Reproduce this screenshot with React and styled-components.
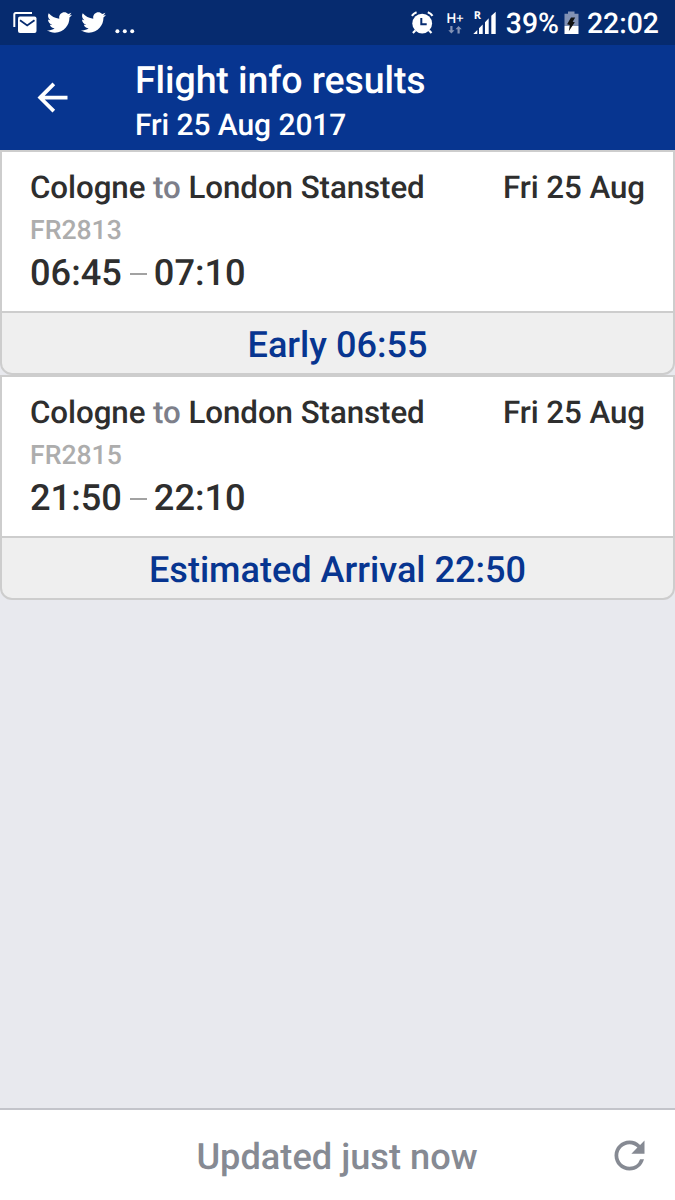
import React from "react";
import styled, { createGlobalStyle } from "styled-components";
import { FaTwitter } from "react-icons/fa";
import { MdArrowBack, MdRefresh } from "react-icons/md";

const GlobalStyle = createGlobalStyle`
  * { box-sizing: border-box; }
  body { margin: 0; font-family: Roboto, "Liberation Sans", sans-serif; font-weight: 500; text-rendering: geometricPrecision; }
  svg { display: block; flex: none; }
`;

const Screen = styled.div`
  display: flex;
  flex-direction: column;
  width: 675px;
  height: 1200px;
  overflow: hidden;
  background: #e8e9ee;
`;

const StatusBar = styled.div`
  display: flex;
  justify-content: space-between;
  height: 45px;
  padding: 0 16px 0 13px;
  background: #062b6f;
  color: #fff;
`;

const StatusGroup = styled.div`
  display: flex;
  align-items: center;
  height: 45px;
`;

const Gap = styled.span`
  flex: none;
  width: ${(p) => p.$w}px;
`;

const StatusText = styled.span`
  font-size: 28.4px;
  line-height: 45px;
  font-weight: 500;
  padding-top: 1px;
  white-space: nowrap;
`;

const Header = styled.header`
  display: flex;
  height: 105px;
  background: #073590;
  color: #fff;
`;

const BackButton = styled.button`
  display: flex;
  align-items: center;
  width: 135px;
  height: 105px;
  padding: 0 0 0 30px;
  border: 0;
  background: none;
  color: inherit;
`;

const Titles = styled.div`
  display: flex;
  flex-direction: column;
  padding-top: 13px;
`;

const Title = styled.h1`
  margin: 0;
  font-size: 37.5px;
  line-height: 46px;
  font-weight: 500;
  letter-spacing: -0.1px;
`;

const Subtitle = styled.div`
  font-size: 30px;
  line-height: 44px;
  letter-spacing: -0.08px;
`;

const Card = styled.article`
  display: flex;
  flex-direction: column;
  height: 225px;
  border: 2px solid #cdcdcd;
  border-radius: 0 0 12px 12px;
  background: #efefef;
  overflow: hidden;
`;

const CardBody = styled.div`
  flex: none;
  height: 161px;
  padding: 16px 28px 0;
  border-bottom: 2px solid #cdcdcd;
  background: #fff;
  color: #2e2e2e;
`;

const Route = styled.div`
  display: flex;
  justify-content: space-between;
  font-size: 31.3px;
  line-height: 40px;
  letter-spacing: -0.07px;
  white-space: pre;
`;

const Muted = styled.span`
  color: #7d7f8a;
`;

const FlightNumber = styled.div`
  font-size: 26.6px;
  line-height: 45px;
  color: #adadad;
`;

const Times = styled.div`
  display: flex;
  align-items: center;
  font-size: 36.2px;
  line-height: 39px;
`;

const Dash = styled.span`
  width: 17px;
  height: 2px;
  margin: 2px 7px 0 8px;
  background: #a2a2a2;
`;

const Status = styled.div`
  height: 60px;
  text-align: center;
  font-size: 36.1px;
  line-height: 65px;
  color: #073590;
`;

const Footer = styled.footer`
  display: flex;
  align-items: center;
  height: 92px;
  margin-top: auto;
  padding: 1px 23px 0 67px;
  border-top: 2px solid #c3c4ca;
  background: #fff;
  color: #868a93;
`;

const Updated = styled.div`
  flex: 1;
  padding-top: 2px;
  text-align: center;
  font-size: 36.2px;
  line-height: 44px;
`;

const MailIcon = () => (
  <svg width="25" height="22" viewBox="0 0 25 22">
    <path d="M1.3 15V2.5Q1.3 1 2.8 1H19" fill="none" stroke="#fff" strokeWidth="2" />
    <rect x="5" y="4.5" width="18.5" height="16.5" rx="2" fill="#fff" />
    <path d="M7 8.2l7.2 5.3L21.5 8.2" fill="none" stroke="#062b6f" strokeWidth="1.8" />
  </svg>
);

const DotsIcon = () => (
  <svg width="20" height="22" viewBox="0 0 20 22" fill="#fff">
    <circle cx="2.4" cy="19.2" r="2" />
    <circle cx="9.8" cy="19.2" r="2" />
    <circle cx="17.2" cy="19.2" r="2" />
  </svg>
);

const AlarmIcon = () => (
  <svg width="23" height="24" viewBox="0 0 23 24">
    <circle cx="11.2" cy="12.6" r="9.9" fill="#fff" />
    <path d="M.9 4.9Q2.5 2.4 5.6 1.2M21.5 4.9Q20 2.4 16.8 1.2M4.3 19.5L1.9 22M18.1 19.5l2.4 2.5" fill="none" stroke="#fff" strokeWidth="2.1" />
    <path d="M10.3 7v6.3h5.4" fill="none" stroke="#062b6f" strokeWidth="2" />
  </svg>
);

const Network = styled.div`
  display: flex;
  flex-direction: column;
  align-items: center;
  gap: 2px;
  width: 18px;
  height: 22px;
`;

const NetworkLabel = styled.span`
  font: 600 13.5px/12px "Open Sans", sans-serif;
  letter-spacing: -0.5px;
`;

const TrafficArrows = () => (
  <svg width="14" height="8" viewBox="0 0 14 8" fill="#8292b5">
    <path d="M2.3 0h2.2v4.2h2L3.4 7.5.3 4.2h2zM9.5 7.5h2.2V3.3h2L10.6 0 7.5 3.3h2z" />
  </svg>
);

const Signal = styled.div`
  display: grid;
  height: 24px;
  > * { grid-area: 1 / 1; }
`;

const RoamingLabel = styled.span`
  font: 700 11px/10px "Open Sans", sans-serif;
  padding-left: 1px;
`;

const SignalBars = () => (
  <svg width="23" height="24" viewBox="0 0 23 24" fill="#fff">
    <path d="M.3 23L4.3 19V23zM6 23v-5.7l3.7-3.8V23zM12 23V11.3l3.7-4V23zM18.3 23V4.7L22.7.7V23z" />
  </svg>
);

const BatteryIcon = () => (
  <svg width="15" height="24" viewBox="0 0 15 24">
    <path d="M4 .5h6.5v2.2H14.5V15H.5V2.7H4z" fill="#8292b5" />
    <path d="M.5 15H14.5V23H.5z" fill="#fff" />
    <path d="M7 6.5h4.2L8.7 10.7l2.1.6L4.8 20.2l1-6.3-2.7-.7z" fill="#121314" />
  </svg>
);

const flights = [
  { number: "FR2813", departs: "06:45", arrives: "07:10", status: "Early 06:55" },
  { number: "FR2815", departs: "21:50", arrives: "22:10", status: "Estimated Arrival 22:50" },
];

const FlightCard = ({ flight }) => (
  <Card>
    <CardBody>
      <Route>
        <span>Cologne <Muted>to</Muted> London Stansted</span>
        <span>Fri 25 Aug</span>
      </Route>
      <FlightNumber>{flight.number}</FlightNumber>
      <Times>
        {flight.departs}
        <Dash />
        {flight.arrives}
      </Times>
    </CardBody>
    <Status>{flight.status}</Status>
  </Card>
);

export default function App() {
  return (
    <Screen>
      <GlobalStyle />
      <StatusBar>
        <StatusGroup>
          <MailIcon />
          <Gap $w={9} />
          <FaTwitter size={25} />
          <Gap $w={9} />
          <FaTwitter size={25} />
          <Gap $w={9} />
          <DotsIcon />
        </StatusGroup>
        <StatusGroup>
          <AlarmIcon />
          <Gap $w={12} />
          <Network>
            <NetworkLabel>H+</NetworkLabel>
            <TrafficArrows />
          </Network>
          <Gap $w={9} />
          <Signal>
            <RoamingLabel>R</RoamingLabel>
            <SignalBars />
          </Signal>
          <Gap $w={10} />
          <StatusText>39%</StatusText>
          <Gap $w={5} />
          <BatteryIcon />
          <Gap $w={8} />
          <StatusText>22:02</StatusText>
        </StatusGroup>
      </StatusBar>
      <Header>
        <BackButton aria-label="Back">
          <MdArrowBack size={45} />
        </BackButton>
        <Titles>
          <Title>Flight info results</Title>
          <Subtitle>Fri 25 Aug 2017</Subtitle>
        </Titles>
      </Header>
      {flights.map((flight) => (
        <FlightCard key={flight.number} flight={flight} />
      ))}
      <Footer>
        <Updated>Updated just now</Updated>
        <MdRefresh size={45} />
      </Footer>
    </Screen>
  );
}
